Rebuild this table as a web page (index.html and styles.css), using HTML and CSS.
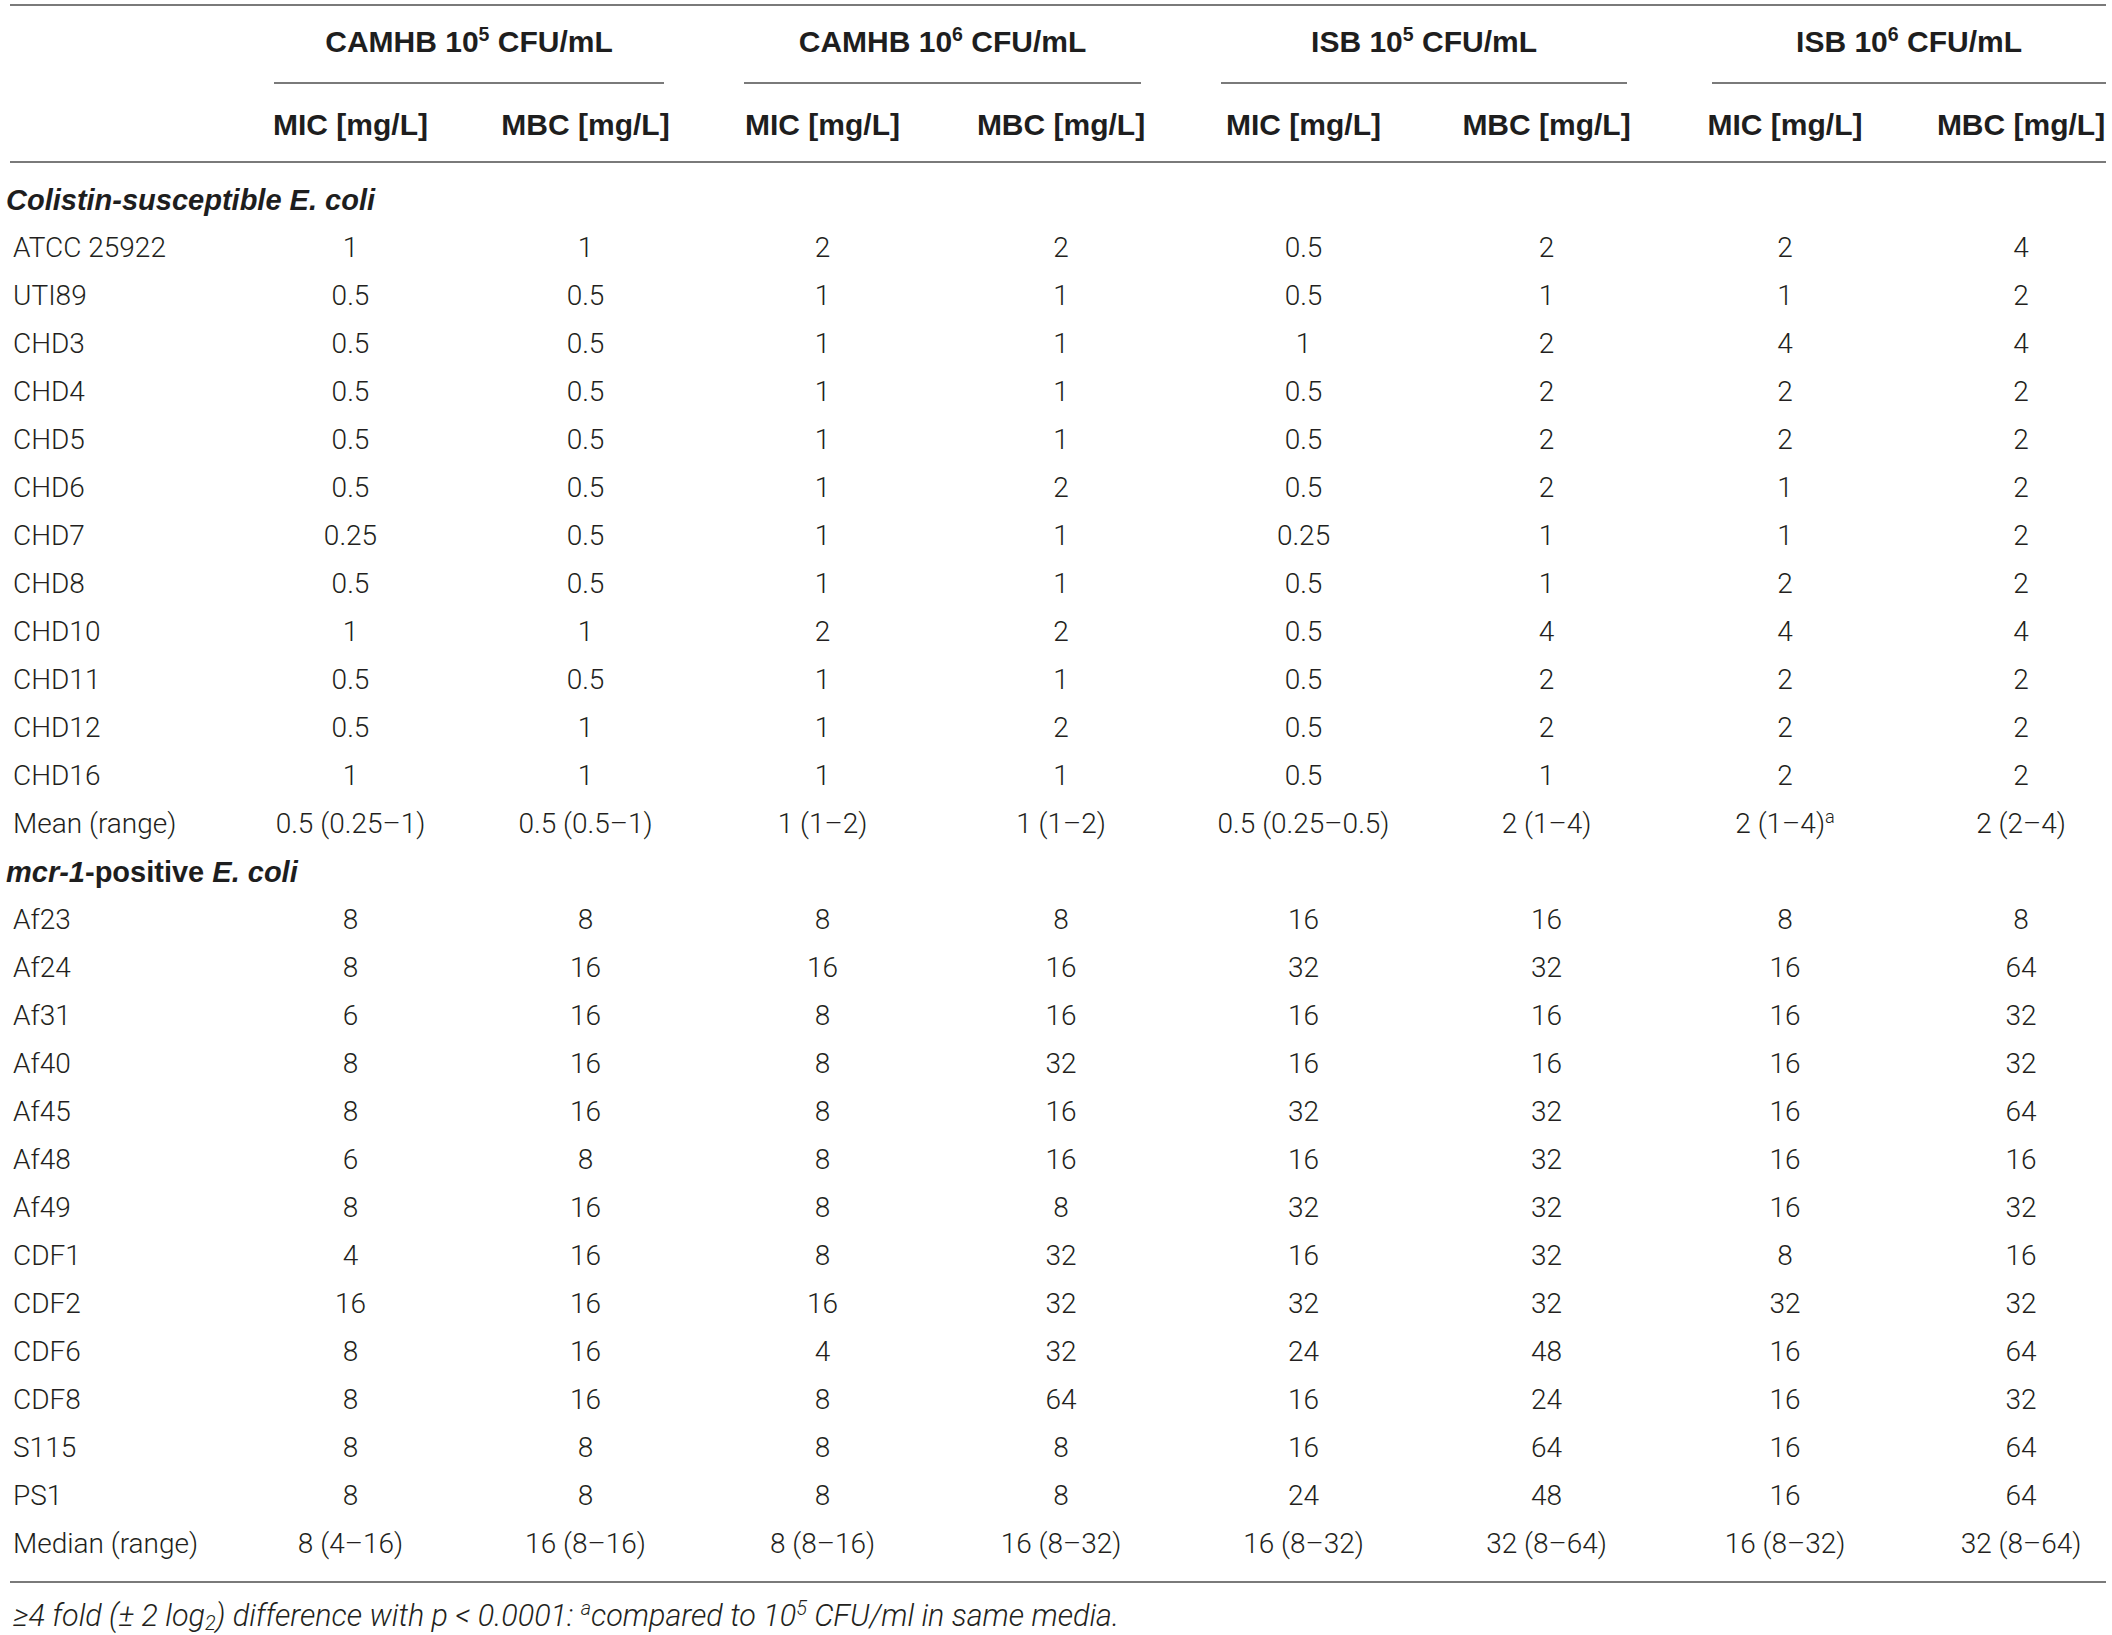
FILE: index.html
```html
<!DOCTYPE html>
<html>
<head>
  <title>MIC / MBC of colistin</title>
  <link rel="stylesheet" href="styles.css">
</head>
<body>
  <div class="sheet">
    <table class="mic-table">
      <colgroup>
        <col class="c-label">
        <col class="c1"><col class="c2"><col class="c3"><col class="c4">
        <col class="c5"><col class="c6"><col class="c7"><col class="c8">
      </colgroup>
      <thead>
        <tr class="groups">
          <th></th>
          <th colspan="2"><div class="group">CAMHB 10<sup>5</sup> CFU/mL</div></th>
          <th colspan="2"><div class="group">CAMHB 10<sup>6</sup> CFU/mL</div></th>
          <th colspan="2"><div class="group">ISB 10<sup>5</sup> CFU/mL</div></th>
          <th colspan="2"><div class="group last">ISB 10<sup>6</sup> CFU/mL</div></th>
        </tr>
        <tr class="units">
          <th></th>
          <th>MIC [mg/L]</th><th>MBC [mg/L]</th>
          <th>MIC [mg/L]</th><th>MBC [mg/L]</th>
          <th>MIC [mg/L]</th><th>MBC [mg/L]</th>
          <th>MIC [mg/L]</th><th>MBC [mg/L]</th>
        </tr>
      </thead>
      <tbody>
        <!-- Colistin-susceptible strains -->
        <tr class="section first"><td colspan="9"><i>Colistin-susceptible E. coli</i></td></tr>
        <tr><td>ATCC 25922</td><td>1</td><td>1</td><td>2</td><td>2</td><td>0.5</td><td>2</td><td>2</td><td>4</td></tr>
        <tr><td>UTI89</td><td>0.5</td><td>0.5</td><td>1</td><td>1</td><td>0.5</td><td>1</td><td>1</td><td>2</td></tr>
        <tr><td>CHD3</td><td>0.5</td><td>0.5</td><td>1</td><td>1</td><td>1</td><td>2</td><td>4</td><td>4</td></tr>
        <tr><td>CHD4</td><td>0.5</td><td>0.5</td><td>1</td><td>1</td><td>0.5</td><td>2</td><td>2</td><td>2</td></tr>
        <tr><td>CHD5</td><td>0.5</td><td>0.5</td><td>1</td><td>1</td><td>0.5</td><td>2</td><td>2</td><td>2</td></tr>
        <tr><td>CHD6</td><td>0.5</td><td>0.5</td><td>1</td><td>2</td><td>0.5</td><td>2</td><td>1</td><td>2</td></tr>
        <tr><td>CHD7</td><td>0.25</td><td>0.5</td><td>1</td><td>1</td><td>0.25</td><td>1</td><td>1</td><td>2</td></tr>
        <tr><td>CHD8</td><td>0.5</td><td>0.5</td><td>1</td><td>1</td><td>0.5</td><td>1</td><td>2</td><td>2</td></tr>
        <tr><td>CHD10</td><td>1</td><td>1</td><td>2</td><td>2</td><td>0.5</td><td>4</td><td>4</td><td>4</td></tr>
        <tr><td>CHD11</td><td>0.5</td><td>0.5</td><td>1</td><td>1</td><td>0.5</td><td>2</td><td>2</td><td>2</td></tr>
        <tr><td>CHD12</td><td>0.5</td><td>1</td><td>1</td><td>2</td><td>0.5</td><td>2</td><td>2</td><td>2</td></tr>
        <tr><td>CHD16</td><td>1</td><td>1</td><td>1</td><td>1</td><td>0.5</td><td>1</td><td>2</td><td>2</td></tr>
        <tr><td>Mean (range)</td><td>0.5 (0.25–1)</td><td>0.5 (0.5–1)</td><td>1 (1–2)</td><td>1 (1–2)</td><td>0.5 (0.25–0.5)</td><td>2 (1–4)</td><td>2 (1–4)<sup>a</sup></td><td>2 (2–4)</td></tr>

        <!-- mcr-1 positive strains -->
        <tr class="section"><td colspan="9"><i>mcr-1</i>-positive <i>E. coli</i></td></tr>
        <tr><td>Af23</td><td>8</td><td>8</td><td>8</td><td>8</td><td>16</td><td>16</td><td>8</td><td>8</td></tr>
        <tr><td>Af24</td><td>8</td><td>16</td><td>16</td><td>16</td><td>32</td><td>32</td><td>16</td><td>64</td></tr>
        <tr><td>Af31</td><td>6</td><td>16</td><td>8</td><td>16</td><td>16</td><td>16</td><td>16</td><td>32</td></tr>
        <tr><td>Af40</td><td>8</td><td>16</td><td>8</td><td>32</td><td>16</td><td>16</td><td>16</td><td>32</td></tr>
        <tr><td>Af45</td><td>8</td><td>16</td><td>8</td><td>16</td><td>32</td><td>32</td><td>16</td><td>64</td></tr>
        <tr><td>Af48</td><td>6</td><td>8</td><td>8</td><td>16</td><td>16</td><td>32</td><td>16</td><td>16</td></tr>
        <tr><td>Af49</td><td>8</td><td>16</td><td>8</td><td>8</td><td>32</td><td>32</td><td>16</td><td>32</td></tr>
        <tr><td>CDF1</td><td>4</td><td>16</td><td>8</td><td>32</td><td>16</td><td>32</td><td>8</td><td>16</td></tr>
        <tr><td>CDF2</td><td>16</td><td>16</td><td>16</td><td>32</td><td>32</td><td>32</td><td>32</td><td>32</td></tr>
        <tr><td>CDF6</td><td>8</td><td>16</td><td>4</td><td>32</td><td>24</td><td>48</td><td>16</td><td>64</td></tr>
        <tr><td>CDF8</td><td>8</td><td>16</td><td>8</td><td>64</td><td>16</td><td>24</td><td>16</td><td>32</td></tr>
        <tr><td>S115</td><td>8</td><td>8</td><td>8</td><td>8</td><td>16</td><td>64</td><td>16</td><td>64</td></tr>
        <tr><td>PS1</td><td>8</td><td>8</td><td>8</td><td>8</td><td>24</td><td>48</td><td>16</td><td>64</td></tr>
        <tr class="last"><td>Median (range)</td><td>8 (4–16)</td><td>16 (8–16)</td><td>8 (8–16)</td><td>16 (8–32)</td><td>16 (8–32)</td><td>32 (8–64)</td><td>16 (8–32)</td><td>32 (8–64)</td></tr>
      </tbody>
    </table>

    <p class="footnote">≥4 fold (± 2 log<sub>2</sub>) difference with p &lt; 0.0001: <sup>a</sup>compared to 10<sup>5</sup> CFU/ml in same media.</p>
  </div>
</body>
</html>
```

FILE: styles.css
```css
/* Page */
body {
  margin: 0;
  background-color: #fff;
  color: #231f20;
  font-family: Roboto, "Liberation Sans", sans-serif;
  font-weight: 300;
  font-size: 28px;
}
.sheet {
  padding: 4px 0 0 10px;
}

/* Table frame */
.mic-table {
  width: 2096px;
  table-layout: fixed;
  border-collapse: collapse;
  border-top: 2px solid #7a7a7a;
  border-bottom: 2px solid #7a7a7a;
}
.c-label { width: 224px; }
.c1 { width: 233px; }
.c2 { width: 237px; }
.c3 { width: 237px; }
.c4 { width: 240px; }
.c5 { width: 245px; }
.c6 { width: 241px; }
.c7 { width: 236px; }
.c8 { width: 203px; }

/* Header */
.mic-table th {
  padding: 0;
  font-family: "Liberation Sans", Arial, sans-serif;
  font-weight: bold;
  font-size: 30px;
  color: #1e1e1e;
  text-align: center;
  white-space: nowrap;
}
.groups th {
  height: 78px;
  vertical-align: bottom;
}
.group {
  margin: 0 40px;
  height: 74px;
  line-height: 68px;
  border-bottom: 2px solid #7a7a7a;
}
.group.last {
  margin: 0 0 0 45px;
}
.units th {
  height: 73px;
  padding-top: 4px;
  border-bottom: 2px solid #7a7a7a;
}
.units th:last-child {
  padding-left: 33px;
}

/* Body rows */
.mic-table td {
  height: 48px;
  padding: 0;
  line-height: 48px;
  text-align: center;
  white-space: nowrap;
}
.mic-table td:first-child {
  text-align: left;
  padding-left: 3px;
}
.mic-table td:last-child {
  padding-left: 33px;
}
.mic-table tr.first td {
  padding-top: 13px;
}
.mic-table tr.last td {
  padding-bottom: 13px;
}
.mic-table tr.section td {
  padding-left: 0;
  text-indent: -4px;
  font-family: "Liberation Sans", Arial, sans-serif;
  font-weight: bold;
  font-size: 29px;
  color: #1e1e1e;
}

sup {
  font-size: 0.65em;
  line-height: 0;
  vertical-align: 0.55em;
}
sub {
  font-size: 0.65em;
  line-height: 0;
  vertical-align: -0.2em;
}

/* Footnote under the table */
.footnote {
  margin: 15px 0 0 3px;
  font-size: 30.5px;
  font-style: italic;
  line-height: 36px;
}
```
